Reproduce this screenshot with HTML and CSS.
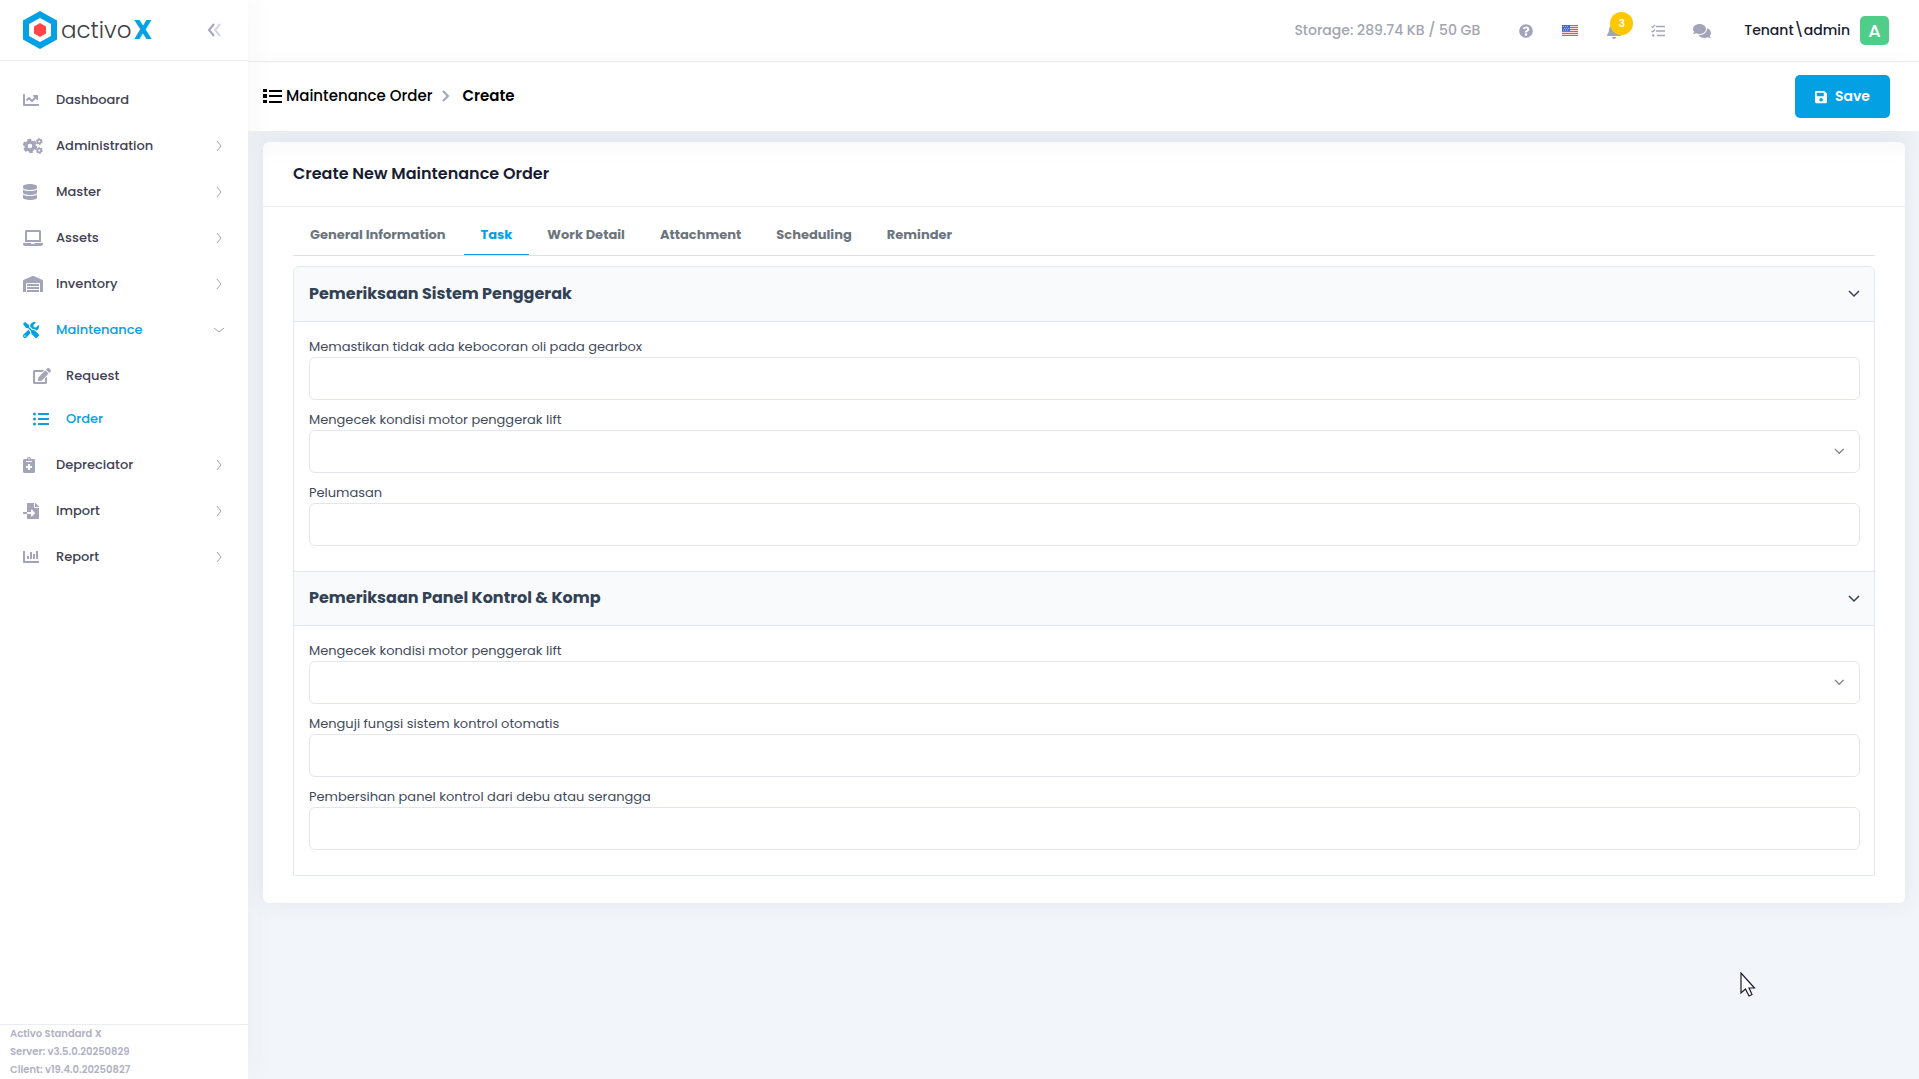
FILE: index.html
```html
<!DOCTYPE html>
<html lang="en">
<head>
  <meta charset="UTF-8">
  <meta name="viewport" content="width=device-width, initial-scale=1.0">
  <title>Maintenance Order - Create</title>
  <link rel="stylesheet" href="styles.css">
</head>
<body>
  <div class="layout">
    <aside class="sidebar">
      <div class="brand">
        <a class="logo" href="#">
          <svg class="logo-mark" viewBox="0 0 34 38"><path d="M17 0L34 9.500V28.500L17 38L0 28.500V9.500Z" fill="#04a0e4"/><path d="M17 7L28 13V25L17 31L6 25V13Z" fill="#fff"/><path d="M17 12L23 15.500V22.500L17 26L11 22.500V15.500Z" fill="#ff4545"/></svg>
          <span class="logo-text">activo</span><span class="logo-x">X</span>
        </a>
        <button class="collapse" type="button" aria-label="Collapse menu">
          <svg viewBox="0 0 14 14"><path d="M7 1L2 7L7 13" stroke="#a2a5b9"/><path d="M13 1L8 7L13 13" stroke="#d3d5e0"/></svg>
        </button>
      </div>

      <nav class="menu">
        <a class="menu-item" href="#">
          <span class="menu-icon"><svg viewBox="0 0 512 512"><path d="M496 384H64V80c0-8.840-7.160-16-16-16H16C7.160 64 0 71.160 0 80v336c0 17.670 14.330 32 32 32h464c8.840 0 16-7.160 16-16v-32c0-8.840-7.160-16-16-16zM464 96H345.940c-21.380 0-32.090 25.850-16.970 40.970l32.400 32.400L288 242.750l-73.370-73.370c-12.500-12.500-32.760-12.500-45.250 0l-68.690 68.690c-6.250 6.250-6.250 16.380 0 22.630l22.620 22.620c6.250 6.250 16.380 6.250 22.630 0L192 237.250l73.370 73.370c12.500 12.500 32.760 12.500 45.250 0l96-96 32.400 32.400c15.120 15.120 40.970 4.410 40.970-16.970V112c.010-8.840-7.150-16-15.990-16z"/></svg></span>
          <span class="menu-text">Dashboard</span>
        </a>
        <a class="menu-item" href="#">
          <span class="menu-icon"><svg viewBox="0 0 20 16"><g fill="none" stroke="currentColor"><circle cx="7" cy="8" r="4" stroke-width="3.400"/><circle cx="7" cy="8" r="6" stroke-width="2.400" stroke-dasharray="3.600 2.680"/><circle cx="16.300" cy="3.500" r="1.900" stroke-width="1.700"/><circle cx="16.300" cy="3.500" r="2.900" stroke-width="1.100" stroke-dasharray="1.600 1.440"/><circle cx="16.300" cy="12.500" r="1.900" stroke-width="1.700"/><circle cx="16.300" cy="12.500" r="2.900" stroke-width="1.100" stroke-dasharray="1.600 1.440"/></g></svg></span>
          <span class="menu-text">Administration</span>
          <svg class="arrow" viewBox="0 0 12 12"><path d="M4 1L8 6L4 11"/></svg>
        </a>
        <a class="menu-item" href="#">
          <span class="menu-icon"><svg viewBox="0 0 448 512"><path d="M448 73.143v45.714C448 159.143 347.667 192 224 192S0 159.143 0 118.857V73.143C0 32.857 100.333 0 224 0s224 32.857 224 73.143zM448 176v102.857C448 319.143 347.667 352 224 352S0 319.143 0 278.857V176c48.125 33.143 136.208 48.572 224 48.572S399.874 209.143 448 176zm0 160v102.857C448 479.143 347.667 512 224 512S0 479.143 0 438.857V336c48.125 33.143 136.208 48.572 224 48.572S399.874 369.143 448 336z"/></svg></span>
          <span class="menu-text">Master</span>
          <svg class="arrow" viewBox="0 0 12 12"><path d="M4 1L8 6L4 11"/></svg>
        </a>
        <a class="menu-item" href="#">
          <span class="menu-icon"><svg viewBox="0 0 640 512"><path d="M624 416H381.540c-.740 19.810-14.710 32-32.740 32H288c-18.690 0-33.020-17.470-32.770-32H16c-8.800 0-16 7.200-16 16v16c0 35.200 28.800 64 64 64h512c35.200 0 64-28.800 64-64v-16c0-8.800-7.200-16-16-16zM576 48c0-26.400-21.600-48-48-48H112C85.600 0 64 21.600 64 48v336h512V48zm-64 272H128V64h384v256z"/></svg></span>
          <span class="menu-text">Assets</span>
          <svg class="arrow" viewBox="0 0 12 12"><path d="M4 1L8 6L4 11"/></svg>
        </a>
        <a class="menu-item" href="#">
          <span class="menu-icon"><svg viewBox="0 0 640 512"><path d="M504 352H136.400c-4.400 0-8 3.600-8 8l-.100 48c0 4.400 3.600 8 8 8H504c4.400 0 8-3.600 8-8v-48c0-4.400-3.600-8-8-8zm0 96H136.100c-4.400 0-8 3.600-8 8l-.100 48c0 4.400 3.600 8 8 8h368c4.400 0 8-3.600 8-8v-48c0-4.400-3.600-8-8-8zm0-192H136.600c-4.400 0-8 3.600-8 8l-.100 48c0 4.400 3.600 8 8 8H504c4.400 0 8-3.600 8-8v-48c0-4.400-3.600-8-8-8zm106.500-139L338.400 3.700a48.150 48.150 0 0 0-36.900 0L29.500 117C11.700 124.500 0 141.900 0 161.300V504c0 4.400 3.600 8 8 8h80c4.400 0 8-3.600 8-8V256c0-17.600 14.600-32 32.600-32h382.800c18 0 32.600 14.400 32.600 32v248c0 4.400 3.600 8 8 8h80c4.400 0 8-3.600 8-8V161.300c0-19.400-11.700-36.800-29.500-44.300z"/></svg></span>
          <span class="menu-text">Inventory</span>
          <svg class="arrow" viewBox="0 0 12 12"><path d="M4 1L8 6L4 11"/></svg>
        </a>
        <a class="menu-item active" href="#">
          <span class="menu-icon"><svg viewBox="0 0 512 512"><path d="M501.100 395.700L384 278.600c-23.100-23.100-57.600-27.600-85.400-13.900L192 158.100V96L64 0 0 64l96 128h62.100l106.600 106.600c-13.600 27.800-9.200 62.300 13.900 85.400l117.100 117.100c14.600 14.600 38.200 14.600 52.700 0l52.700-52.700c14.500-14.600 14.500-38.200 0-52.700zM331.700 225c28.300 0 54.900 11 74.900 31l19.400 19.400c15.800-6.900 30.800-16.500 43.800-29.500 37.100-37.100 49.700-89.300 37.900-136.700-2.200-9-13.500-12.100-20.100-5.500l-74.400 74.400-67.900-11.300L334 98.900l74.400-74.400c6.600-6.600 3.400-17.900-5.700-20.200-47.400-11.700-99.600.900-136.600 37.900-28.500 28.500-41.900 66.100-41.200 103.600l82.100 82.100c8.100-1.900 16.500-2.900 24.700-2.900zm-103.900 82l-56.700-56.700L18.700 402.800c-25 25-25 65.500 0 90.500s65.500 25 90.500 0l123.600-123.600c-7.600-19.900-9.900-41.600-5-62.700zM64 472c-13.200 0-24-10.800-24-24 0-13.300 10.700-24 24-24s24 10.700 24 24c0 13.200-10.700 24-24 24z"/></svg></span>
          <span class="menu-text">Maintenance</span>
          <svg class="arrow" viewBox="0 0 12 12"><path d="M1 4L6 8L11 4"/></svg>
        </a>
        <div class="submenu">
          <a class="menu-item" href="#">
            <span class="menu-icon"><svg viewBox="0 0 576 512"><path d="M402.600 83.200l90.200 90.200c3.800 3.800 3.800 10 0 13.800L274.400 405.600l-92.800 10.300c-12.400 1.400-22.900-9.100-21.500-21.500l10.300-92.800L388.800 83.200c3.800-3.800 10-3.800 13.800 0zm162-22.900l-48.800-48.800c-15.200-15.200-39.900-15.200-55.200 0l-35.400 35.400c-3.800 3.800-3.800 10 0 13.800l90.200 90.200c3.800 3.800 10 3.800 13.800 0l35.400-35.400c15.200-15.300 15.200-40 0-55.200zM384 346.200V448H64V128h229.800c3.200 0 6.200-1.300 8.500-3.500l40-40c7.600-7.600 2.200-20.500-8.500-20.500H48C21.500 64 0 85.500 0 112v352c0 26.500 21.500 48 48 48h352c26.500 0 48-21.500 48-48V306.200c0-10.700-12.900-16-20.500-8.500l-40 40c-2.200 2.300-3.500 5.300-3.500 8.500z"/></svg></span>
            <span class="menu-text">Request</span>
          </a>
          <a class="menu-item active" href="#">
            <span class="menu-icon"><svg viewBox="0 0 512 512"><path d="M48 48a48 48 0 1 0 48 48 48 48 0 0 0-48-48zm0 160a48 48 0 1 0 48 48 48 48 0 0 0-48-48zm0 160a48 48 0 1 0 48 48 48 48 0 0 0-48-48zm448 16H176a16 16 0 0 0-16 16v32a16 16 0 0 0 16 16h320a16 16 0 0 0 16-16v-32a16 16 0 0 0-16-16zm0-320H176a16 16 0 0 0-16 16v32a16 16 0 0 0 16 16h320a16 16 0 0 0 16-16V80a16 16 0 0 0-16-16zm0 160H176a16 16 0 0 0-16 16v32a16 16 0 0 0 16 16h320a16 16 0 0 0 16-16v-32a16 16 0 0 0-16-16z"/></svg></span>
            <span class="menu-text">Order</span>
          </a>
        </div>
        <a class="menu-item" href="#">
          <span class="menu-icon"><svg viewBox="0 0 384 512"><path d="M336 64h-80c0-35.300-28.700-64-64-64s-64 28.700-64 64H48C21.500 64 0 85.500 0 112v352c0 26.500 21.500 48 48 48h288c26.500 0 48-21.500 48-48V112c0-26.500-21.500-48-48-48zM192 40c13.300 0 24 10.700 24 24s-10.700 24-24 24-24-10.700-24-24 10.700-24 24-24zm96 304c0 4.400-3.600 8-8 8h-56v56c0 4.400-3.600 8-8 8h-48c-4.400 0-8-3.600-8-8v-56h-56c-4.400 0-8-3.600-8-8v-48c0-4.400 3.600-8 8-8h56v-56c0-4.400 3.600-8 8-8h48c4.400 0 8 3.600 8 8v56h56c4.400 0 8 3.600 8 8v48zm0-192c0 4.400-3.600 8-8 8H104c-4.400 0-8-3.600-8-8v-16c0-4.400 3.600-8 8-8h176c4.400 0 8 3.600 8 8v16z"/></svg></span>
          <span class="menu-text">Depreciator</span>
          <svg class="arrow" viewBox="0 0 12 12"><path d="M4 1L8 6L4 11"/></svg>
        </a>
        <a class="menu-item" href="#">
          <span class="menu-icon"><svg viewBox="0 0 512 512"><path d="M16 288c-8.800 0-16 7.200-16 16v32c0 8.800 7.200 16 16 16h112v-64zm489-183L407.100 7c-4.500-4.500-10.600-7-17-7H384v128h128v-6.100c0-6.300-2.500-12.400-7-16.900zm-153 31V0H152c-13.300 0-24 10.700-24 24v264h128v-65.200c0-14.300 17.300-21.400 27.400-11.300L379 308c6.600 6.700 6.600 17.400 0 24l-95.700 96.400c-10.100 10.100-27.400 3-27.400-11.300V352H128v136c0 13.300 10.700 24 24 24h336c13.300 0 24-10.700 24-24V160H376c-13.200 0-24-10.800-24-24z"/></svg></span>
          <span class="menu-text">Import</span>
          <svg class="arrow" viewBox="0 0 12 12"><path d="M4 1L8 6L4 11"/></svg>
        </a>
        <a class="menu-item" href="#">
          <span class="menu-icon"><svg viewBox="0 0 512 512"><path d="M332.800 320h38.400c6.400 0 12.800-6.400 12.800-12.800V172.800c0-6.400-6.400-12.800-12.800-12.800h-38.400c-6.400 0-12.800 6.400-12.800 12.800v134.400c0 6.400 6.400 12.800 12.800 12.800zm96 0h38.400c6.400 0 12.800-6.400 12.800-12.800V76.800c0-6.400-6.400-12.800-12.800-12.800h-38.400c-6.400 0-12.800 6.400-12.800 12.800v230.400c0 6.400 6.400 12.800 12.800 12.800zm-288 0h38.400c6.400 0 12.800-6.400 12.800-12.800v-70.400c0-6.400-6.400-12.800-12.800-12.800h-38.400c-6.400 0-12.800 6.400-12.800 12.800v70.400c0 6.400 6.400 12.800 12.800 12.800zm96 0h38.400c6.400 0 12.800-6.400 12.800-12.800V108.800c0-6.400-6.400-12.800-12.800-12.800h-38.400c-6.400 0-12.800 6.400-12.800 12.800v198.400c0 6.400 6.400 12.800 12.800 12.800zM496 384H64V80c0-8.840-7.160-16-16-16H16C7.160 64 0 71.160 0 80v336c0 17.670 14.330 32 32 32h464c8.840 0 16-7.160 16-16v-32c0-8.840-7.160-16-16-16z"/></svg></span>
          <span class="menu-text">Report</span>
          <svg class="arrow" viewBox="0 0 12 12"><path d="M4 1L8 6L4 11"/></svg>
        </a>
      </nav>

      <div class="version">
        <div>Activo Standard X</div>
        <div>Server: v3.5.0.20250829</div>
        <div>Client: v19.4.0.20250827</div>
      </div>
    </aside>

    <div class="main">
      <header class="topbar">
        <span class="storage">Storage: 289.74 KB / 50 GB</span>
        <div class="tools">
          <button class="tool" type="button" aria-label="Help"><svg class="icon-sm" viewBox="0 0 512 512"><path d="M504 256c0 136.997-111.043 248-248 248S8 392.997 8 256C8 119.083 119.043 8 256 8s248 111.083 248 248zM262.655 90c-54.497 0-89.255 22.957-116.549 63.758-3.536 5.286-2.353 12.415 2.715 16.258l34.699 26.310c5.205 3.947 12.621 3.008 16.665-2.122 17.864-22.658 30.113-35.797 57.303-35.797 20.429 0 45.698 13.148 45.698 32.958 0 14.976-12.363 22.667-32.534 33.976C247.128 238.528 216 254.941 216 296v4c0 6.627 5.373 12 12 12h56c6.627 0 12-5.373 12-12v-1.333c0-28.462 83.186-29.647 83.186-106.667 0-58.002-60.165-102-116.531-102zM256 338c-25.365 0-46 20.635-46 46 0 25.364 20.635 46 46 46s46-20.636 46-46c0-25.365-20.635-46-46-46z"/></svg></button>
          <button class="tool" type="button" aria-label="Language"><svg class="flag" viewBox="0 0 16 11"><path fill="#f4dcd8" d="M0 0h16v11H0z"/><path stroke="#e0584c" d="M0 .500h16M0 2.500h16M0 4.500h16M0 6.500h16M0 8.500h16M0 10.500h16"/><path fill="#3f6bd0" d="M0 0h8v6H0z"/><path stroke="#a9c0f0" stroke-dasharray="1 1" d="M1 1.500h6M2 3.500h5M1 5h6"/></svg></button>
          <button class="tool" type="button" aria-label="Notifications"><svg viewBox="0 0 448 512"><path d="M224 512c35.320 0 63.970-28.650 63.970-64H160.030c0 35.350 28.650 64 63.970 64zm215.390-149.710c-19.320-20.760-55.470-51.990-55.470-154.290 0-77.700-54.480-139.900-127.940-155.160V32c0-17.670-14.320-32-31.980-32s-31.980 14.330-31.980 32v20.840C118.560 68.100 64.080 130.300 64.080 208c0 102.300-36.150 133.530-55.470 154.290-6 6.450-8.660 14.160-8.610 21.710.110 16.400 12.980 32 32.100 32h383.800c19.120 0 32-15.600 32.100-32 .050-7.550-2.610-15.270-8.610-21.710z"/></svg><span class="badge">3</span></button>
          <button class="tool" type="button" aria-label="Tasks"><svg class="icon-sm" viewBox="0 0 14 14"><g fill="none" stroke="currentColor"><path stroke-width="1.600" d="M5 2.500h9M5 7h9M6 11.500h8"/><path stroke-width="1.200" d="M.500 2.300l1.200 1.200L4 1M.500 6.800L1.700 8L4 5.500"/></g><circle cx="2.200" cy="11.500" r="1.200"/></svg></button>
          <button class="tool" type="button" aria-label="Chat"><svg viewBox="0 0 576 512"><path d="M416 192c0-88.400-93.100-160-208-160S0 103.600 0 192c0 34.300 14.100 65.900 38 92-13.400 30.200-35.500 54.200-35.800 54.500-2.200 2.300-2.800 5.700-1.500 8.700S4.800 352 8 352c36.600 0 66.900-12.300 88.700-25 32.200 15.700 70.300 25 111.300 25 114.900 0 208-71.600 208-160zm122 220c23.900-26 38-57.700 38-92 0-66.900-53.500-124.200-129.300-148.100.900 6.600 1.300 13.300 1.300 20.100 0 105.900-107.700 192-240 192-10.800 0-21.300-.800-31.700-1.900C207.800 439.600 281.800 480 368 480c41 0 79.100-9.200 111.300-25 21.800 12.700 52.100 25 88.700 25 3.200 0 6.100-1.900 7.300-4.800 1.300-2.900.700-6.300-1.500-8.700-.300-.300-22.400-24.200-35.800-54.500z"/></svg></button>
        </div>
        <a class="user" href="#"><span>Tenant\admin</span><span class="avatar">A</span></a>
      </header>

      <div class="subheader">
        <div class="breadcrumb">
          <svg class="crumb-icon" viewBox="0 0 19 14"><path d="M0 0h4v3H0zM0 5h4v4H0zM0 11h4v3H0zM6 1h13v2H6zM6 6h13v2H6zM6 12h13v2H6z"/></svg>
          <a href="#">Maintenance Order</a>
          <svg class="crumb-arrow" viewBox="0 0 8 12"><path d="M1 1L6 6L1 11"/></svg>
          <strong>Create</strong>
        </div>
        <button class="save" type="button">
          <svg viewBox="0 0 448 512"><path d="M433.941 129.941l-83.882-83.882A48 48 0 0 0 316.118 32H48C21.490 32 0 53.490 0 80v352c0 26.510 21.490 48 48 48h352c26.510 0 48-21.490 48-48V163.882a48 48 0 0 0-14.059-33.941zM224 416c-35.346 0-64-28.654-64-64 0-35.346 28.654-64 64-64s64 28.654 64 64c0 35.346-28.654 64-64 64zm96-304.520V212c0 6.627-5.373 12-12 12H76c-6.627 0-12-5.373-12-12V108c0-6.627 5.373-12 12-12h228.520c3.183 0 6.235 1.264 8.485 3.515l3.480 3.480A11.996 11.996 0 0 1 320 111.480z"/></svg>
          Save
        </button>
      </div>

      <main class="content">
        <section class="card">
          <h1 class="card-title">Create New Maintenance Order</h1>
          <div class="card-body">
            <div class="tabs" role="tablist">
              <button class="tab" type="button" role="tab">General Information</button>
              <button class="tab selected" type="button" role="tab" aria-selected="true">Task</button>
              <button class="tab" type="button" role="tab">Work Detail</button>
              <button class="tab" type="button" role="tab">Attachment</button>
              <button class="tab" type="button" role="tab">Scheduling</button>
              <button class="tab" type="button" role="tab">Reminder</button>
            </div>

            <form class="accordion">
              <details open>
                <summary>
                  <h2>Pemeriksaan Sistem Penggerak</h2>
                  <svg class="toggle" viewBox="0 0 12 8"><path d="M1 1L6 6L11 1"/></svg>
                </summary>
                <div class="fields">
                  <div class="field">
                    <label for="gearbox">Memastikan tidak ada kebocoran oli pada gearbox</label>
                    <input type="text" id="gearbox">
                  </div>
                  <div class="field">
                    <label for="motor1">Mengecek kondisi motor penggerak lift</label>
                    <div class="select">
                      <select id="motor1"><option value=""></option></select>
                      <svg viewBox="0 0 12 8"><path d="M1 1L6 6L11 1"/></svg>
                    </div>
                  </div>
                  <div class="field">
                    <label for="pelumasan">Pelumasan</label>
                    <input type="text" id="pelumasan">
                  </div>
                </div>
              </details>
              <details open>
                <summary>
                  <h2>Pemeriksaan Panel Kontrol &amp; Komp</h2>
                  <svg class="toggle" viewBox="0 0 12 8"><path d="M1 1L6 6L11 1"/></svg>
                </summary>
                <div class="fields">
                  <div class="field">
                    <label for="motor2">Mengecek kondisi motor penggerak lift</label>
                    <div class="select">
                      <select id="motor2"><option value=""></option></select>
                      <svg viewBox="0 0 12 8"><path d="M1 1L6 6L11 1"/></svg>
                    </div>
                  </div>
                  <div class="field">
                    <label for="otomatis">Menguji fungsi sistem kontrol otomatis</label>
                    <input type="text" id="otomatis">
                  </div>
                  <div class="field">
                    <label for="panel">Pembersihan panel kontrol dari debu atau serangga</label>
                    <input type="text" id="panel">
                  </div>
                </div>
              </details>
            </form>
          </div>
        </section>
      </main>
    </div>
  </div>

  <svg class="pointer" viewBox="0 0 16 25"><path d="M1 1V21L5.500 17L9 24L12 22.500L9 16H14.500Z" fill="#fff" stroke="#1a1a2b" stroke-width="1.200"/></svg>
</body>
</html>
```
FILE: styles.css
```css
* {
  box-sizing: border-box;
}
body {
  margin: 0;
  font-family: Poppins, Inter, sans-serif;
  font-size: 13px;
  color: #3f4254;
  background: #f2f6fa;
}
a {
  color: inherit;
  text-decoration: none;
}
button {
  font-family: inherit;
  border: none;
  background: none;
  padding: 0;
  cursor: pointer;
}
svg {
  display: block;
  flex: none;
  fill: currentColor;
}
.layout {
  display: flex;
  min-height: 100vh;
}

/* sidebar */
.sidebar {
  position: relative;
  z-index: 2;
  width: 248px;
  flex: none;
  display: flex;
  flex-direction: column;
  background: #fff;
  box-shadow: 0 0 28px rgba(82, 63, 105, 0.05);
}
.brand {
  height: 61px;
  display: flex;
  align-items: center;
  justify-content: space-between;
  padding: 0 27px 0 23px;
  border-bottom: 1px solid #ebedf3;
}
.logo {
  display: flex;
  align-items: center;
  line-height: 38px;
}
.logo-mark {
  height: 38px;
  margin-right: 4px;
}
.logo-text {
  font-size: 23px;
  font-weight: 300;
  color: #3c4043;
}
.logo-x {
  margin-left: 2px;
  font-size: 26px;
  font-weight: 700;
  color: #04a0e4;
}
.collapse svg {
  height: 14px;
  fill: none;
  stroke-width: 2;
}
.menu {
  flex: 1;
  padding-top: 16px;
}
.menu-item {
  height: 46px;
  display: flex;
  align-items: center;
  padding: 0 23px;
  font-weight: 500;
}
.menu-icon {
  width: 33px;
  color: #a2a5b9;
}
.menu-icon svg {
  height: 16px;
}
.menu-text {
  flex: 1;
}
.arrow {
  height: 12px;
  fill: none;
  stroke: #a2a5b9;
}
.submenu {
  padding: 1px 0 2px;
}
.submenu .menu-item {
  height: 43px;
  padding-left: 33px;
}
.menu-item.active,
.active .menu-icon {
  color: #04a0e4;
}
.version {
  padding: 0 10px;
  border-top: 1px solid #ebedf3;
  font-size: 10px;
  font-weight: 600;
  line-height: 18px;
  color: #b0b2c3;
}

/* top bar */
.main {
  flex: 1;
  min-width: 0;
}
.topbar {
  height: 62px;
  display: flex;
  align-items: center;
  justify-content: flex-end;
  padding: 0 30px;
  background: #fff;
  border-bottom: 1px solid #ebedf3;
}
.storage {
  font-size: 14px;
  font-weight: 500;
  color: #a2a5b0;
}
.tools {
  display: flex;
  padding: 0 20px 0 24px;
}
.tool {
  position: relative;
  width: 44px;
  height: 44px;
  display: flex;
  align-items: center;
  justify-content: center;
  color: #a2a5b9;
}
.tool svg {
  height: 16px;
}
.tool .icon-sm {
  height: 14px;
}
.tool .flag {
  height: 11px;
}
.badge {
  position: absolute;
  top: 3px;
  right: 3px;
  width: 23px;
  height: 23px;
  border-radius: 50%;
  background: #ffc700;
  color: #fff;
  font-size: 11px;
  font-weight: 600;
  line-height: 23px;
}
.user {
  display: flex;
  align-items: center;
  gap: 10px;
  font-size: 14px;
  font-weight: 500;
  color: #181c32;
}
.avatar {
  width: 29px;
  height: 29px;
  border-radius: 5px;
  background: #50cd89;
  color: #fff;
  font-size: 18px;
  line-height: 29px;
  text-align: center;
}
.subheader {
  position: relative;
  z-index: 1;
  height: 69px;
  display: flex;
  align-items: center;
  justify-content: space-between;
  padding: 0 29px 0 15px;
  background: #fff;
  box-shadow: 0 10px 30px rgba(82, 63, 105, 0.05);
}
.breadcrumb {
  display: flex;
  align-items: center;
  padding-bottom: 2px;
  font-size: 15px;
  font-weight: 500;
  color: #000;
}
.breadcrumb strong {
  font-weight: 600;
}
.crumb-icon {
  height: 14px;
  margin-right: 4px;
}
.crumb-arrow {
  height: 12px;
  margin: 0 12px 0 10px;
  fill: none;
  stroke: #a2a5b9;
  stroke-width: 2;
}
.save {
  height: 43px;
  display: flex;
  align-items: center;
  gap: 8px;
  padding: 0 20px;
  border-radius: 5px;
  background: #04a0e4;
  color: #fff;
  font-size: 14px;
  font-weight: 600;
}
.save svg {
  height: 14px;
}

/* content */
.content {
  padding: 11px 14px 20px 15px;
}
.card {
  background: #fff;
  border-radius: 6px;
  box-shadow: 0 0 20px rgba(76, 87, 125, 0.1);
}
.card-title {
  margin: 0;
  padding: 0 30px;
  border-bottom: 1px solid #ebedf3;
  font-size: 16px;
  font-weight: 600;
  line-height: 64px;
  color: #181c32;
}
.card-body {
  padding: 8px 30px 27px;
}
.tabs {
  display: flex;
  gap: 1px;
  margin-bottom: 10px;
  border-bottom: 1px solid #dee2e6;
}
.tab {
  height: 40px;
  padding: 0 17px;
  border-bottom: 1px solid transparent;
  font-size: 13px;
  font-weight: 700;
  color: #6c757d;
}
.tab.selected {
  color: #04a0e4;
  border-color: #04a0e4;
}
.accordion {
  border: 1px solid #e2e8f0;
  border-radius: 6px 6px 0 0;
}
details + details {
  border-top: 1px solid #e2e8f0;
}
summary {
  height: 55px;
  display: flex;
  align-items: center;
  justify-content: space-between;
  padding: 0 14px 0 15px;
  background: #f8fafc;
  border-bottom: 1px solid #e2e8f0;
  border-radius: 6px 6px 0 0;
  cursor: pointer;
}
details + details summary {
  height: 54px;
  border-radius: 0;
}
summary h2 {
  margin: 0;
  padding-bottom: 2px;
  font-size: 16px;
  font-weight: 700;
  color: #334155;
}
.toggle {
  height: 8px;
  fill: none;
  stroke: #334155;
  stroke-width: 1.5;
}
.fields {
  padding: 15px 14px 15px 15px;
}
.field {
  margin-bottom: 10px;
}
.field label {
  display: block;
  line-height: 20px;
  color: #3f4a5c;
}
.field input,
.field select {
  display: block;
  width: 100%;
  height: 43px;
  padding: 0 12px;
  border: 1px solid #e4e6ef;
  border-radius: 6px;
  background: #fff;
  font: inherit;
  color: inherit;
}
.field select {
  appearance: none;
}
.select {
  position: relative;
}
.select svg {
  position: absolute;
  right: 16px;
  top: 18px;
  height: 7px;
  fill: none;
  stroke: #7e8299;
  stroke-width: 1.5;
  pointer-events: none;
}
.pointer {
  position: fixed;
  left: 1740px;
  top: 972px;
  height: 25px;
  pointer-events: none;
}
```
